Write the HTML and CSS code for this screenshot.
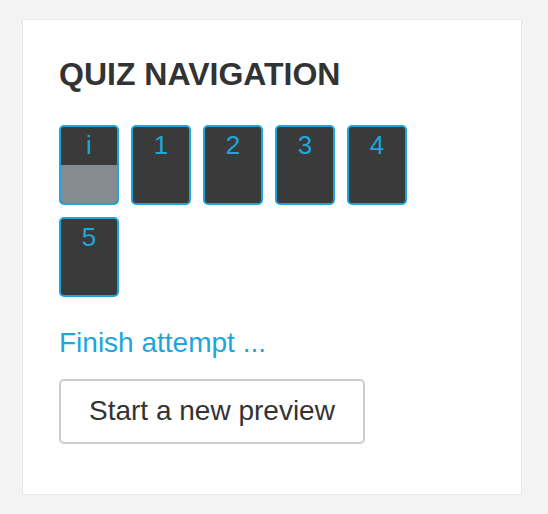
FILE: index.html
```html
<!DOCTYPE html>
<html lang="en">
<head>
  <meta charset="UTF-8" />
  <meta name="viewport" content="width=device-width, initial-scale=1.0"/>
  <title>Quiz navigation</title>
  <link rel="stylesheet" href="styles.css">
</head>
<body>
  <div class="block">
    <h2>Quiz navigation</h2>

    <div class="qn-buttons">
      <a class="qn-button info" href="#"><span class="qn-label">i</span><span class="qn-light"></span></a>
      <a class="qn-button" href="#"><span class="qn-label">1</span><span class="qn-light"></span></a>
      <a class="qn-button" href="#"><span class="qn-label">2</span><span class="qn-light"></span></a>
      <a class="qn-button" href="#"><span class="qn-label">3</span><span class="qn-light"></span></a>
      <a class="qn-button" href="#"><span class="qn-label">4</span><span class="qn-light"></span></a>
      <a class="qn-button" href="#"><span class="qn-label">5</span><span class="qn-light"></span></a>
    </div>

    <a class="finish" href="#">Finish attempt ...</a>
    <button class="btn" type="button">Start a new preview</button>
  </div>
</body>
</html>
```

FILE: styles.css
```css
body {
  font-family: "Liberation Sans", Arial, sans-serif;
  background: #f3f3f3;
  margin: 0;
  padding: 19px 0 0 22px;
  color: #333;
}

.block {
  width: 425px;
  background: white;
  border: 1px solid #e8e8e8;
  padding: 35px 37px 50px 36px;
}

.block h2 {
  margin: 0 0 32px;
  font-size: 32px;
  line-height: 1.2;
  font-weight: bold;
  text-transform: uppercase;
  color: #333;
}

.qn-buttons {
  display: grid;
  grid-template-columns: repeat(5, 60px);
  gap: 12px;
  margin-bottom: 25px;
}

.qn-button {
  display: flex;
  flex-direction: column;
  height: 76px;
  background: #3a3a3a;
  border: 2px solid #1ea6da;
  border-radius: 5px;
  overflow: hidden;
  text-decoration: none;
}

.qn-label {
  height: 38px;
  padding-top: 3px;
  box-sizing: border-box;
  text-align: center;
  font-size: 26px;
  line-height: 1.2;
  color: #1ea6da;
}

.qn-light {
  flex: 1;
}

.info .qn-light {
  background: #858b90;
}

.finish {
  display: block;
  font-size: 28px;
  line-height: 1.5;
  color: #1ea6da;
  text-decoration: none;
  margin-bottom: 15px;
}

.btn {
  font-family: inherit;
  font-size: 28px;
  line-height: 42px;
  color: #333;
  background: white;
  border: 2px solid #cccccc;
  border-radius: 5px;
  padding: 9px 28px 10px;
}
```
